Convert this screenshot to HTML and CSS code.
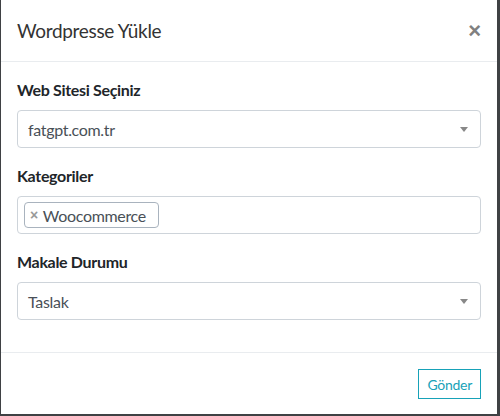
FILE: index.html
```html
<!DOCTYPE html>
<html lang="tr">
<head>
<meta charset="utf-8">
<title>Wordpresse Yükle</title>
<link rel="stylesheet" href="styles.css">
</head>
<body>
<div class="modal">
  <div class="modal-header">
    <h4 class="modal-title">Wordpresse Yükle</h4>
    <button class="close" type="button" aria-label="Close">×</button>
  </div>
  <div class="modal-body">
    <div class="form-group">
      <label class="label">Web Sitesi Seçiniz</label>
      <div class="select">
        <span class="select-value">fatgpt.com.tr</span>
        <span class="arrow"></span>
      </div>
    </div>
    <div class="form-group">
      <label class="label">Kategoriler</label>
      <div class="select multi">
        <span class="chip"><span class="chip-x">×</span>Woocommerce</span>
      </div>
    </div>
    <div class="form-group">
      <label class="label">Makale Durumu</label>
      <div class="select">
        <span class="select-value">Taslak</span>
        <span class="arrow"></span>
      </div>
    </div>
  </div>
  <div class="modal-footer">
    <button class="btn" type="button">Gönder</button>
  </div>
</div>
</body>
</html>
```
FILE: styles.css
```css
html, body {
  margin: 0;
  padding: 0;
}
body {
  width: 500px;
  height: 416px;
  background: #3f4144;
  font-family: "Lato", "Liberation Sans", sans-serif;
  color: #212529;
  box-sizing: border-box;
  padding: 0 3px 2px 1px;
  letter-spacing: -0.02em;
}
.modal {
  background: #fff;
  height: 414px;
  display: flex;
  flex-direction: column;
}
.modal-header {
  display: flex;
  align-items: flex-start;
  justify-content: space-between;
  padding: 16px;
  border-bottom: 1px solid #e9ecef;
  height: 29px;
}
.modal-title {
  margin: 0;
  font-size: 19px;
  line-height: 30px;
  font-weight: 400;
  color: #333;
}
.close {
  border: 0;
  background: none;
  padding: 0;
  margin: 0 0 0 0;
  font-family: "Liberation Sans", sans-serif;
  font-size: 22px;
  font-weight: 700;
  line-height: 30px;
  color: #808080;
  cursor: pointer;
}
.modal-body {
  padding: 16px;
}
.form-group {
  margin-bottom: 16px;
}
.label {
  display: block;
  font-size: 16px;
  font-weight: 700;
  line-height: 24px;
  margin-bottom: 8px;
  color: #212529;
}
.select {
  position: relative;
  height: 38px;
  box-sizing: border-box;
  border: 1px solid #ced4da;
  border-radius: 4px;
  display: flex;
  align-items: center;
  padding: 0 12px 0 10px;
}
.select-value {
  font-size: 16px;
  color: #495057;
}
.arrow {
  position: absolute;
  right: 12px;
  top: 16px;
  width: 0;
  height: 0;
  border-style: solid;
  border-width: 5px 4px 0 4px;
  border-color: #888 transparent transparent transparent;
}
.multi {
  padding: 0 6px;
}
.chip {
  display: inline-flex;
  align-items: center;
  height: 26px;
  box-sizing: border-box;
  border: 1px solid #a9b3be;
  border-radius: 4px;
  padding: 0 12px 0 5px;
  font-size: 16px;
  color: #495057;
}
.chip-x {
  color: #999;
  font-size: 14px;
  font-weight: 700;
  margin-right: 5px;
  font-family: "Liberation Sans", sans-serif;
}
.modal-footer {
  border-top: 1px solid #e9ecef;
  padding: 12px;
  display: flex;
  justify-content: flex-end;
}
.btn {
  margin: 4px;
  height: 30px;
  padding: 0 8px;
  border: 1px solid #17a2b8;
  border-radius: 0;
  background: #fff;
  color: #17a2b8;
  font-family: "Lato", "Liberation Sans", sans-serif;
  font-size: 14px;
  letter-spacing: -0.02em;
}
```
